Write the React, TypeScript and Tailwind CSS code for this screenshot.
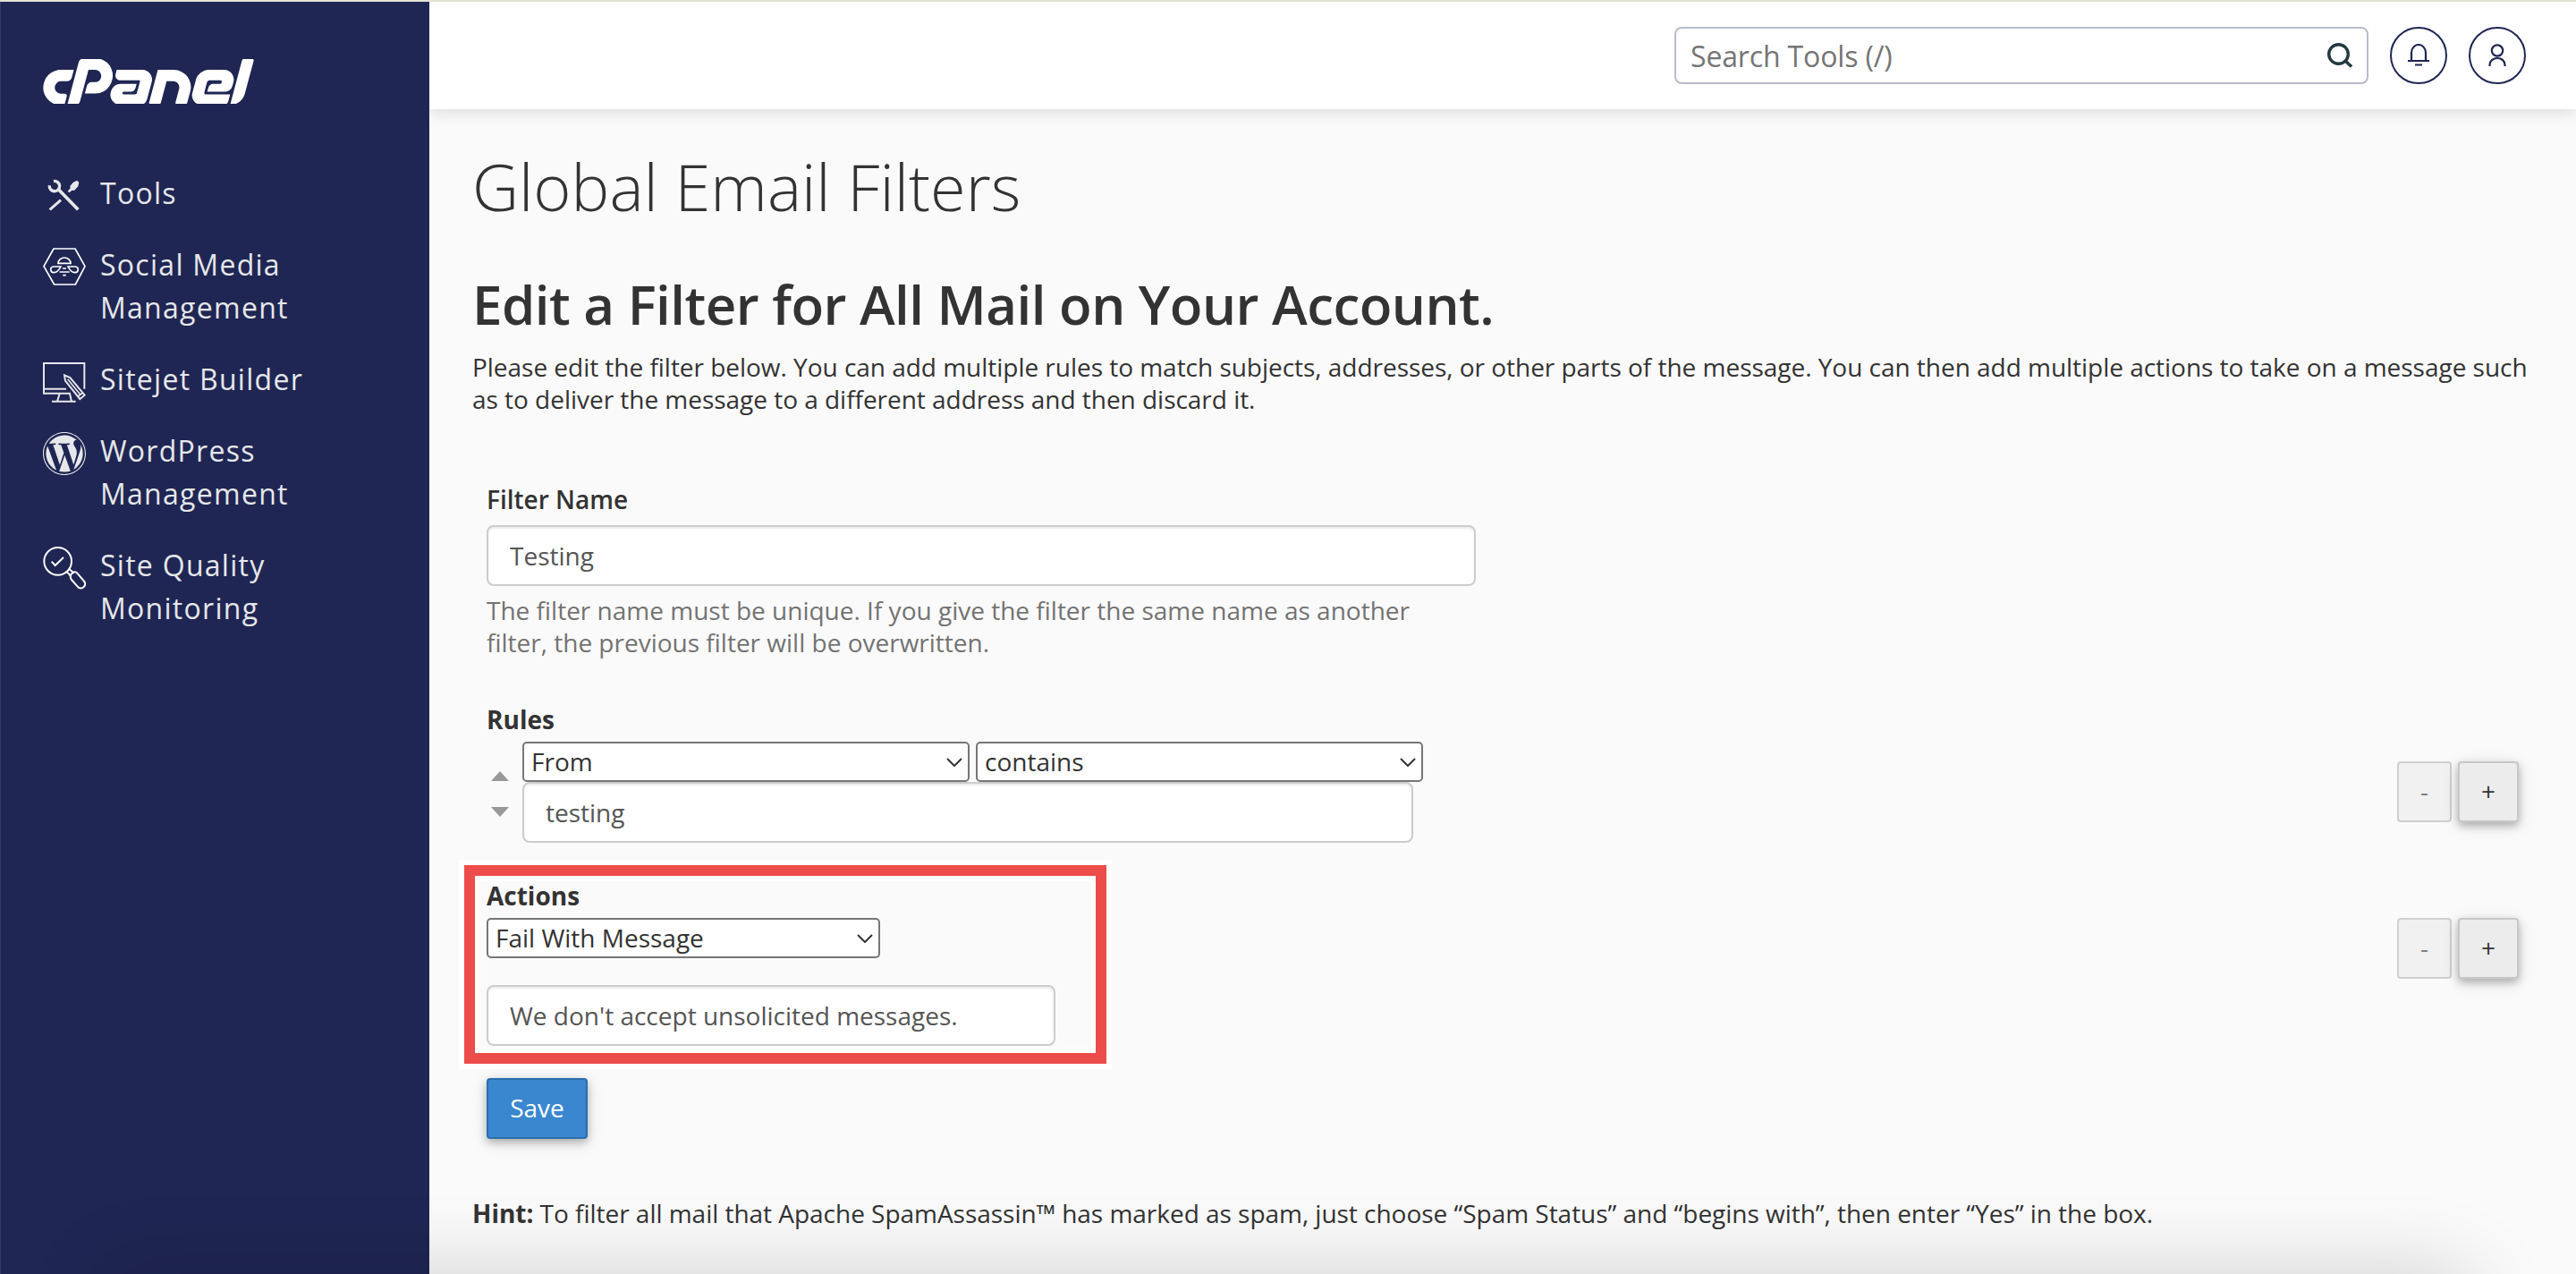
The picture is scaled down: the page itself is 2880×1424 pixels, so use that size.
import React from 'react';
import { SiCpanel } from 'react-icons/si';
import { FaWordpress } from 'react-icons/fa';
import { clsx } from 'clsx';

interface NavItem {
  label: string;
  icon: React.ReactNode;
}

const ToolsIcon = () => (
  <svg viewBox="0 0 144 156" className="h-[52px] w-12" fill="none" stroke="currentColor">
    <path d="M36 31.5a17 17 0 1 1-14 14" strokeWidth="10" />
    <path d="M53 60l65 67" strokeWidth="11" />
    <path d="M60 95l-37 32" strokeWidth="9" />
    <path
      d="M114 29l7 6-3 14-13 14-7-1-10 8-5-5 9-10-1-7 10-12z"
      fill="currentColor"
      stroke="none"
    />
  </svg>
);

const SocialIcon = () => (
  <svg
    viewBox="0 0 144 156"
    className="h-[52px] w-12 text-white"
    fill="none"
    stroke="currentColor"
    strokeWidth="5"
  >
    <path d="M3 77l33-59h72l33 59-32 61H38z" strokeLinejoin="round" />
    <path d="M51 67a21 19 0 0 1 42 0z" />
    <path d="M60 78H36c-14 1-12 20 0 20 10 0 18-8 24-20z" />
    <path d="M84 78h24c14 1 12 20 0 20-10 0-18-8-24-20z" />
    <path d="M66 84h12M56 96h33M67 107h10" />
  </svg>
);

const SitejetIcon = () => (
  <svg
    viewBox="0 0 144 156"
    className="h-[52px] w-12"
    fill="none"
    stroke="currentColor"
    strokeWidth="6"
  >
    <path d="M139 104V18H3v101h90M3 104h75" />
    <path d="M56 120l-8 26M90 120l6 26M30 146h80" />
    <path d="M72 58l3 19 49 61 16-13-49-59z" />
    <path d="M83 71l44 54M117 130l16-13" strokeWidth="5" />
  </svg>
);

const QualityIcon = () => (
  <svg
    viewBox="0 0 144 156"
    className="h-[52px] w-12 text-white"
    fill="none"
    stroke="currentColor"
    strokeWidth="6"
  >
    <circle cx="50" cy="58" r="46" />
    <path d="M29 59l12 13 28-27" />
    <path d="M78 91l16 17M87 83l16 14" />
    <path d="M93 103l10-8c4-2 8-1 12 3l23 27c10 13-5 30-20 20L96 120c-4-5-5-9-3-17z" />
  </svg>
);

const navItems: NavItem[] = [
  { label: 'Tools', icon: <ToolsIcon /> },
  { label: 'Social Media Management', icon: <SocialIcon /> },
  { label: 'Sitejet Builder', icon: <SitejetIcon /> },
  {
    label: 'WordPress Management',
    icon: <FaWordpress viewBox="8 8 496 496" className="mt-[3px] h-12 w-12" />,
  },
  { label: 'Site Quality Monitoring', icon: <QualityIcon /> },
];

const Sidebar = () => (
  <aside className="relative z-10 w-[480px] shrink-0 border-l border-[#343b66] bg-[#1f2653]">
    <SiCpanel viewBox="0 9.42 24 5.1" className="mt-16 ml-[47px] h-[50px] w-[236px] text-white" />
    <nav className="mt-[76px] ml-[47px] flex flex-col gap-8 text-[#e6e7ea]">
      {navItems.map((item) => (
        <a key={item.label} className="flex items-start gap-4">
          <span className="-mb-1 shrink-0">{item.icon}</span>
          <span className="w-[240px] text-[32px] leading-[48px] tracking-[1.28px]">
            {item.label}
          </span>
        </a>
      ))}
    </nav>
  </aside>
);

const Header = () => (
  <header className="relative flex h-[120px] items-start justify-end bg-white pt-7 pr-14 text-[#1f2653] shadow-[0_4px_16px_rgba(0,0,0,0.12)]">
    <div className="flex h-16 w-[776px] items-center rounded-lg border-2 border-[#b9bbcc] pr-4 pl-4">
      <input
        className="flex-1 pt-0.5 text-[32px] tracking-[-0.15px] outline-none placeholder:text-[#757575]"
        placeholder="Search Tools (/)"
      />
      <svg viewBox="0 0 28 28" className="h-7 w-7" fill="none" stroke="#24383f" strokeWidth="3.4">
        <circle cx="12.5" cy="12.5" r="10.8" />
        <path d="M20 20l7 6.5" />
      </svg>
    </div>
    <button className="ml-6 flex h-16 w-16 items-center justify-center rounded-full border-2 border-[#1f2653]">
      <svg
        viewBox="0 0 24 26"
        className="h-[26px] w-6"
        fill="none"
        stroke="currentColor"
        strokeWidth="2.2"
      >
        <path d="M4 19v-9a8 9 0 0 1 16 0v9M0 19h24M8 23.5h8" />
      </svg>
    </button>
    <button className="ml-6 flex h-16 w-16 items-center justify-center rounded-full border-2 border-[#1f2653]">
      <svg
        viewBox="0 0 20 26"
        className="h-[26px] w-5"
        fill="none"
        stroke="currentColor"
        strokeWidth="2.2"
      >
        <circle cx="10" cy="7.5" r="6.2" />
        <path d="M1.5 25v-1.5a8.5 7.5 0 0 1 17 0V25" />
      </svg>
    </button>
  </header>
);

const TextField = ({ value, className }: { value: string; className?: string }) => (
  <input
    defaultValue={value}
    className={clsx(
      'block h-[68px] rounded-lg border-2 border-[#ccc] bg-white px-6 text-[28px] text-[#555] shadow-[inset_0_2px_2px_rgba(0,0,0,0.075)] outline-none',
      className
    )}
  />
);

const Select = ({ value, className }: { value: string; className?: string }) => (
  <div
    className={clsx(
      'flex h-[45px] items-center justify-between rounded-[5px] border-2 border-[#767676] bg-white pr-1.5 pl-2',
      className
    )}
  >
    <span className="pb-0.5">{value}</span>
    <svg viewBox="0 0 18 10" className="h-2.5 w-[18px]" fill="none" stroke="#333" strokeWidth="2">
      <path d="M1 1l8 8 8-8" />
    </svg>
  </div>
);

const RowButtons = () => (
  <div className="flex gap-[7px]">
    <button className="h-[68px] w-[61px] rounded border-2 border-[#cfcfcf] bg-[#f1f1f1] pb-0.5 text-[#808080]">
      -
    </button>
    <button className="h-[68px] w-[68px] rounded border-2 border-[#c8c8c8] bg-[#ececec] pb-0.5 shadow-[0_4px_10px_rgba(0,0,0,0.26),0_4px_20px_rgba(0,0,0,0.1)]">
      +
    </button>
  </div>
);

export default function App() {
  return (
    <div className="relative flex h-[1424px] w-[2880px] overflow-hidden border-t-2 border-[#e3e3d5] bg-[#fafafa] font-['Open_Sans',sans-serif] text-[28px] leading-9 text-[#333]">
      <Sidebar />
      <div className="flex-1">
        <Header />
        <main className="px-12 pt-[46px]">
          <h1 className="text-7xl leading-20 font-light">Global Email Filters</h1>
          <h2 className="mt-[60px] text-6xl leading-16 font-semibold tracking-[-0.52px]">
            Edit a Filter for All Mail on Your Account.
          </h2>
          <p className="mt-5 tracking-[-0.028px]">
            Please edit the filter below. You can add multiple rules to match subjects, addresses, or
            other parts of the message. You can then add multiple actions to take on a message such
            <br />
            as to deliver the message to a different address and then discard it.
          </p>

          <form className="mx-4 mt-[76px]">
            <label className="block font-semibold">Filter Name</label>
            <TextField value="Testing" className="mt-[11px] w-[1106px]" />
            <p className="mt-[9px] text-[#737373]">
              The filter name must be unique. If you give the filter the same name as another
              <br />
              filter, the previous filter will be overwritten.
            </p>

            {/* Rules */}
            <div className="mt-[50px] font-bold">Rules</div>
            <div className="mt-[7px] flex items-center">
              <div className="flex w-10 flex-col gap-[29px] pt-[3px] pl-[5px] text-[#999]">
                <svg viewBox="0 0 20 11" className="h-[11px] w-5" fill="currentColor">
                  <path d="M10 0l10 11H0z" />
                </svg>
                <svg viewBox="0 0 20 11" className="h-[11px] w-5" fill="currentColor">
                  <path d="M10 11L0 0h20z" />
                </svg>
              </div>
              <div>
                <div className="flex gap-[7px]">
                  <Select value="From" className="w-[500px]" />
                  <Select value="contains" className="w-[500px]" />
                </div>
                <TextField value="testing" className="w-[996px]" />
              </div>
              <div className="ml-auto pb-px">
                <RowButtons />
              </div>
            </div>

            {/* Actions */}
            <div className="relative mt-[41px]">
              <div className="font-bold">Actions</div>
              <div className="mt-[7px] flex items-start justify-between">
                <div>
                  <Select value="Fail With Message" className="w-[440px]" />
                  <TextField
                    value="We don't accept unsolicited messages."
                    className="mt-[30px] w-[636px]"
                  />
                </div>
                <RowButtons />
              </div>
              <div className="pointer-events-none absolute -top-[22px] -left-[31px] h-[234px] w-[730px] border-[6px] border-white">
                <div className="h-full border-[12px] border-[#ec4d4a]">
                  <div className="h-full border-[6px] border-white" />
                </div>
              </div>
            </div>

            <button className="mt-9 block h-[68px] w-[113px] rounded border-2 border-[#2a6fad] bg-[#3a87d0] pb-0.5 text-white shadow-[0_4px_10px_rgba(0,0,0,0.26),0_4px_20px_rgba(0,0,0,0.1)]">
              Save
            </button>
          </form>

          <p className="mt-[65px] tracking-[-0.028px]">
            <strong>Hint:</strong> To filter all mail that Apache SpamAssassin™ has marked as spam,
            just choose “Spam Status” and “begins with”, then enter “Yes” in the box.
          </p>
        </main>
      </div>
      {/* Shade rising from the bottom edge */}
      <div className="pointer-events-none absolute top-full right-[120px] left-[120px] z-20 h-20 shadow-[0_0_90px_rgba(0,0,0,0.18)]" />
    </div>
  );
}
